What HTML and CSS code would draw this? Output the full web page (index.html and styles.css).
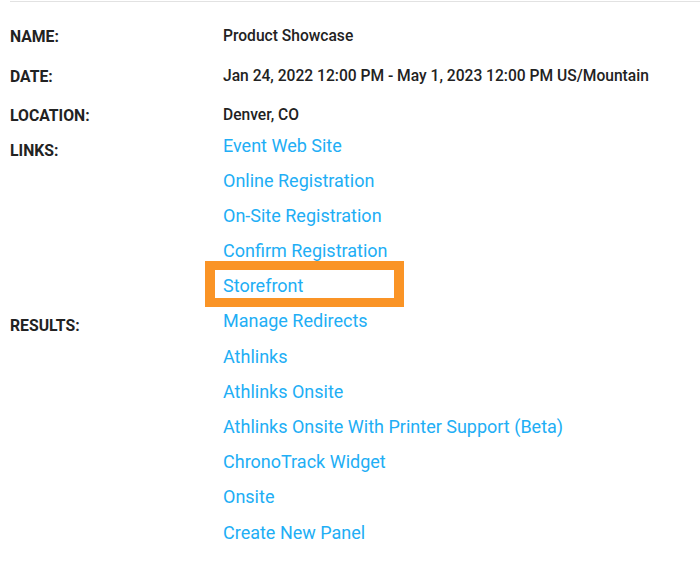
FILE: index.html
```html
<!DOCTYPE html>
<html lang="en">
<head>
    <meta charset="UTF-8">
    <meta name="viewport" content="width=device-width, initial-scale=1.0">
    <title>Event Details</title>
    <link rel="stylesheet" href="styles.css">
</head>
<body>
    <div class="details">
        <div class="row info">
            <div class="label">NAME:</div>
            <div class="value">Product Showcase</div>
        </div>
        <div class="row info">
            <div class="label">DATE:</div>
            <div class="value">Jan 24, 2022 12:00 PM - May 1, 2023 12:00 PM US/Mountain</div>
        </div>
        <div class="row info">
            <div class="label">LOCATION:</div>
            <div class="value">Denver, CO</div>
        </div>
        <div class="row links">
            <div class="label">LINKS:</div>
            <ul class="link-list">
                <li><a href="#">Event Web Site</a></li>
                <li><a href="#">Online Registration</a></li>
                <li><a href="#">On-Site Registration</a></li>
                <li><a href="#">Confirm Registration</a></li>
                <li class="highlight"><a href="#">Storefront</a></li>
            </ul>
        </div>
        <div class="row links">
            <div class="label">RESULTS:</div>
            <ul class="link-list">
                <li><a href="#">Manage Redirects</a></li>
                <li><a href="#">Athlinks</a></li>
                <li><a href="#">Athlinks Onsite</a></li>
                <li><a href="#">Athlinks Onsite With Printer Support (Beta)</a></li>
                <li><a href="#">ChronoTrack Widget</a></li>
                <li><a href="#">Onsite</a></li>
                <li><a href="#">Create New Panel</a></li>
            </ul>
        </div>
    </div>
</body>
</html>
```

FILE: styles.css
```css
body {
    font-family: Roboto, "Liberation Sans", sans-serif;
    margin: 0;
    padding: 0;
    background-color: white;
    color: #222;
}

.details {
    margin-top: 1px;
    margin-left: 10px;
    border-top: 1px solid #e2e2e2;
    padding-top: 15px;
}

.row {
    display: grid;
    grid-template-columns: 213px 1fr;
}

.label {
    font-size: 15.75px;
    font-weight: bold;
    line-height: 20px;
    color: #222;
}

.row.info {
    padding: 10px 0;
    line-height: 19.5px;
}

.row.info .label {
    line-height: 19.5px;
}

.value {
    font-size: 15.6px;
    font-weight: 500;
}

.row.links + .row.links {
    margin-top: 15.2px;
}

.row.links .label {
    padding-top: 5px;
}

.link-list {
    list-style: none;
    margin: 0;
    padding: 0;
    display: flex;
    flex-direction: column;
    gap: 15.2px;
}

.link-list li {
    line-height: 20px;
    font-size: 18px;
}

.link-list a {
    color: #21aef5;
    text-decoration: none;
}

.link-list .highlight {
    position: relative;
}

.link-list .highlight::before {
    content: "";
    position: absolute;
    left: -18px;
    top: -15px;
    width: 179px;
    height: 28px;
    border: 10px solid #fa9426;
    border-top-width: 9px;
    border-bottom-width: 9px;
}
```
